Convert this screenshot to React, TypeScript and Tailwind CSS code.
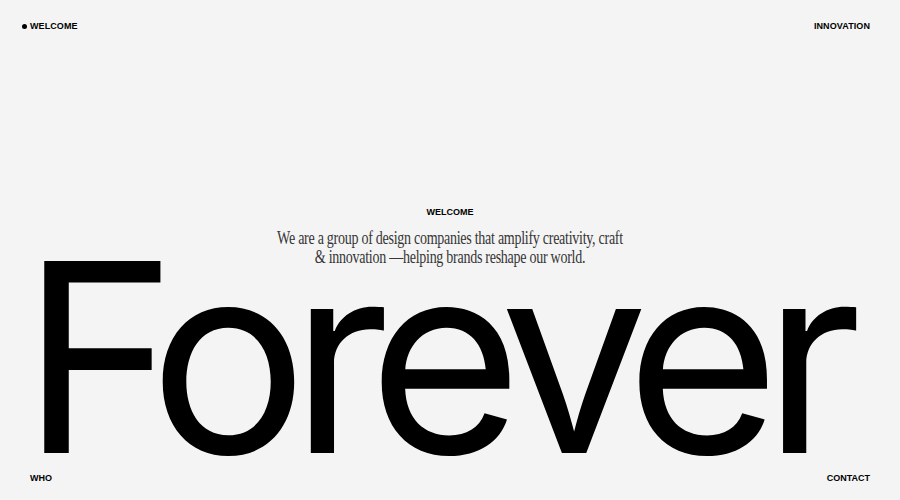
export default function App() {
  return (
    <div className="h-[500px] w-full overflow-hidden bg-[#f4f4f4] text-black flex flex-col">
      <header className="flex justify-between items-center px-[30px] pt-[21px] h-[32px] text-[9px] font-extrabold tracking-[0.01em] font-['Liberation_Sans',Arial,sans-serif]">
        <div className="flex items-center gap-[2px] -ml-[8px]">
          <span className="w-[5px] h-[5px] rounded-full bg-black mr-[1px]" />
          <span>WELCOME</span>
        </div>
        <span>INNOVATION</span>
      </header>
      <main className="flex flex-col items-center mt-[176px]">
        <div className="text-[9px] font-extrabold font-['Liberation_Sans',Arial,sans-serif] leading-none">WELCOME</div>
        <p className="mt-[12px] text-center text-[18px] leading-[19px] text-[#363636] font-['Liberation_Serif','Times_New_Roman',serif] tracking-[-0.02em] w-[470px] scale-x-[0.78]">
          We are a group of design companies that amplify creativity, craft<br />&amp; innovation —helping brands reshape our world.
        </p>
      </main>
      <div className="-mt-[42px] pr-[34px] flex justify-center whitespace-nowrap font-['Inter',sans-serif] font-normal text-[264px] leading-none tracking-[-0.065em]">
        Forever
      </div>
      <footer className="-mt-[17px] flex justify-between px-[30px] text-[9px] font-extrabold font-['Liberation_Sans',Arial,sans-serif]">
        <span>WHO</span>
        <span>CONTACT</span>
      </footer>
    </div>
  );
}
